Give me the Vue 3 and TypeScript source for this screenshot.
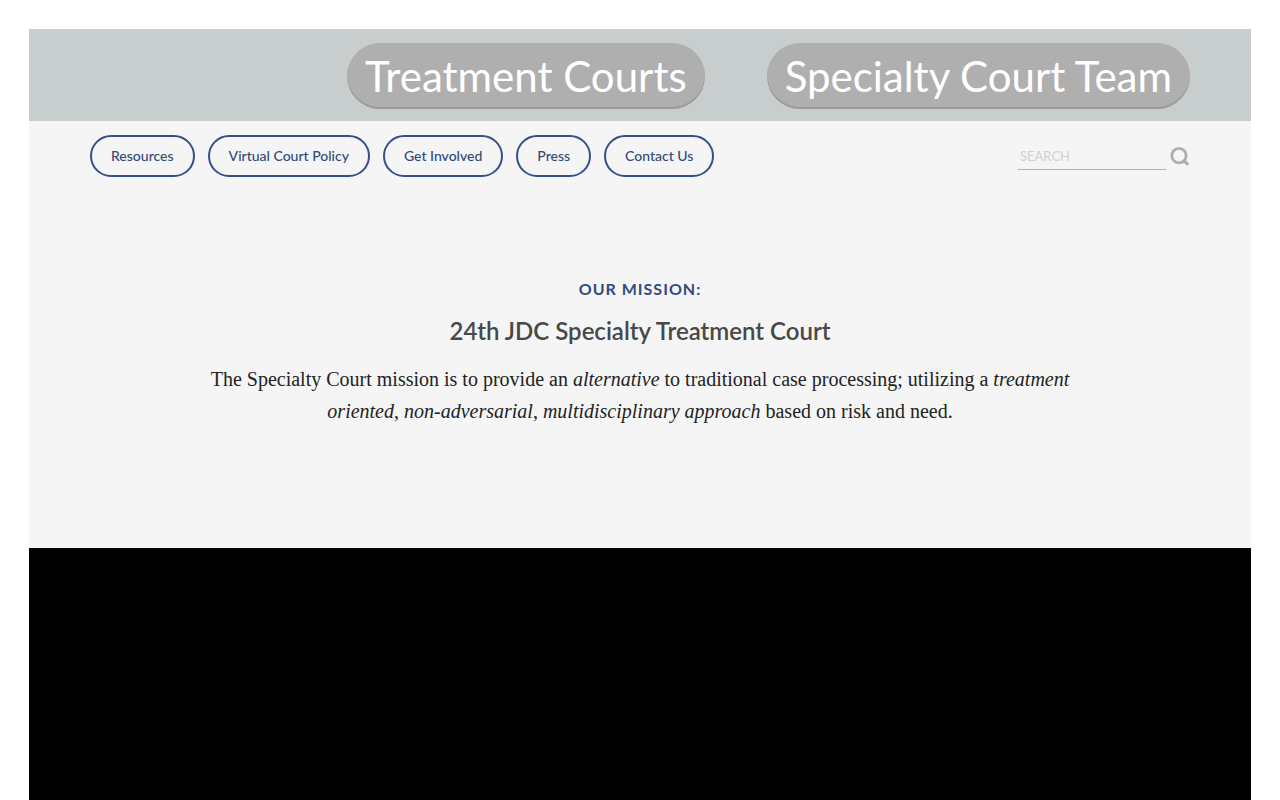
<script setup lang="ts">
import { ref } from 'vue'

interface NavLink {
  label: string
  href: string
}

const primaryLinks: NavLink[] = [
  { label: 'Treatment Courts', href: '#treatment-courts' },
  { label: 'Specialty Court Team', href: '#specialty-court-team' },
]

const secondaryLinks: NavLink[] = [
  { label: 'Resources', href: '#resources' },
  { label: 'Virtual Court Policy', href: '#virtual-court-policy' },
  { label: 'Get Involved', href: '#get-involved' },
  { label: 'Press', href: '#press' },
  { label: 'Contact Us', href: '#contact-us' },
]

const query = ref('')
</script>

<template>
  <div class="page">
    <header>
      <nav class="primary" aria-label="Primary">
        <a v-for="link in primaryLinks" :key="link.href" :href="link.href" class="primary-link">{{ link.label }}</a>
      </nav>
      <div class="toolbar">
        <nav class="secondary" aria-label="Secondary">
          <a v-for="link in secondaryLinks" :key="link.href" :href="link.href" class="secondary-link">{{ link.label }}</a>
        </nav>
        <form class="search" role="search" @submit.prevent>
          <input v-model="query" class="search-input" type="text" placeholder="SEARCH" aria-label="Search" />
          <button class="search-button" type="submit" aria-label="Submit search">
            <svg width="20" height="20" viewBox="0 0 20 20" fill="none" stroke="#aeaeae" aria-hidden="true">
              <circle cx="9" cy="9.6" r="7.2" stroke-width="2.8" />
              <path d="M13.2 13.8L18.2 18.8" stroke-width="3.2" />
            </svg>
          </button>
        </form>
      </div>
    </header>
    <main class="mission">
      <h2 class="eyebrow">OUR MISSION:</h2>
      <h1 class="title">24th JDC Specialty Treatment Court</h1>
      <p class="statement">
        The Specialty Court mission is to provide an <em>alternative</em> to traditional case processing; utilizing a
        <em>treatment oriented</em>, <em>non-adversarial</em>, <em>multidisciplinary approach</em> based on risk and need.
      </p>
    </main>
    <section class="feature" aria-label="Feature"></section>
  </div>
</template>

<style>
body {
  margin: 0;
  background: #fff;
}
</style>

<style scoped>
.page {
  display: flex;
  flex-direction: column;
  box-sizing: border-box;
  min-height: 100vh;
  padding: 29px 29px 0;
  font-family: Lato, 'Liberation Sans', sans-serif;
}

.primary {
  display: flex;
  flex-wrap: wrap;
  justify-content: flex-end;
  gap: 14px 62px;
  padding: 14px 61px 12px;
  background: #c8cdcd;
}

.primary-link {
  box-sizing: border-box;
  padding: 0 18px;
  border-radius: 33px;
  background: #afafaf;
  box-shadow: inset 0 -2px 0 #999c9c;
  color: #fff;
  font-size: 42px;
  font-weight: 400;
  line-height: 66px;
  text-align: center;
  text-decoration: none;
}

.toolbar {
  display: flex;
  flex-wrap: wrap;
  align-items: center;
  justify-content: space-between;
  gap: 14px;
  padding: 14px 61px;
  background: #f5f5f5;
}

.secondary {
  display: flex;
  flex-wrap: wrap;
  gap: 13px;
}

.secondary-link {
  padding: 0 19px;
  border: 2px solid #34508a;
  border-radius: 21px;
  color: #304b78;
  font-size: 14px;
  font-weight: 500;
  line-height: 38px;
  text-decoration: none;
}

.search {
  display: flex;
  align-items: center;
  gap: 4px;
}

.search-input {
  box-sizing: border-box;
  width: 148px;
  height: 28px;
  padding: 0 2px;
  border: 0;
  border-bottom: 1px solid #aeaeae;
  border-radius: 0;
  outline: none;
  background: transparent;
  color: #555;
  font-family: inherit;
  font-size: 13px;
}

.search-input::placeholder {
  color: #d0d0d0;
  opacity: 1;
}

.search-button {
  display: flex;
  padding: 0;
  border: 0;
  background: none;
  cursor: pointer;
}

.mission {
  padding: 86px 61px 121px;
  background: #f5f5f5;
  text-align: center;
}

.eyebrow {
  margin: 0;
  color: #304b82;
  font-size: 16px;
  font-weight: 700;
  letter-spacing: 1px;
  line-height: 24px;
}

.title {
  margin: 14px 0 16px;
  color: #484848;
  font-size: 24px;
  font-weight: 600;
  line-height: 32px;
}

.statement {
  max-width: 900px;
  margin: 0 auto;
  color: #222;
  font-family: 'Liberation Serif', serif;
  font-size: 20px;
  line-height: 32px;
}

.feature {
  flex: 1;
  min-height: 252px;
  background: #000;
}
</style>
